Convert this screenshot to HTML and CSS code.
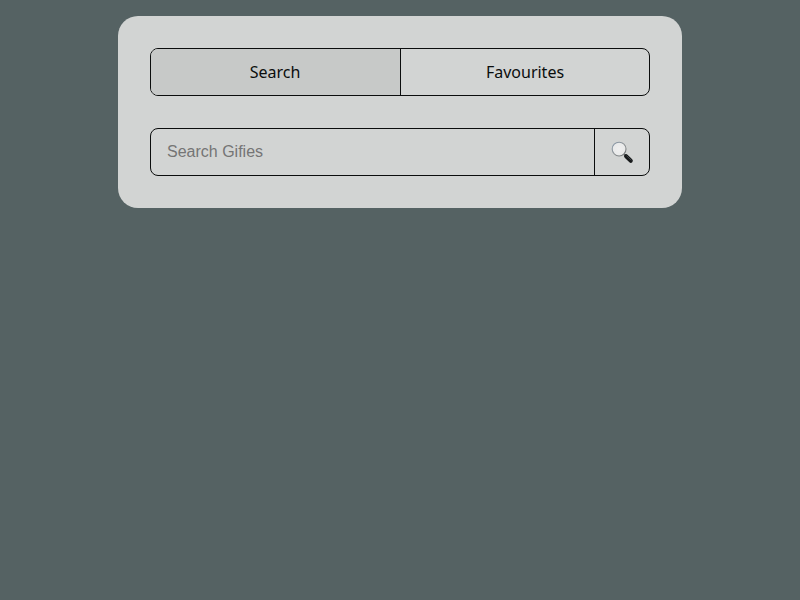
FILE: index.html
```html
<!DOCTYPE html>
<html lang="en">
<head>
<meta charset="utf-8">
<title>Gifies</title>
<link rel="stylesheet" href="styles.css">
</head>
<body>
<main class="panel">
  <nav class="tabs">
    <button class="tab active" type="button">Search</button>
    <button class="tab" type="button">Favourites</button>
  </nav>
  <form class="search">
    <input class="search-input" type="text" placeholder="Search Gifies">
    <button class="search-button" type="button">
      <svg class="glass" viewBox="0 0 24 24" width="24" height="24">
        <defs>
          <linearGradient id="rim" x1="0" y1="0" x2="1" y2="1">
            <stop offset="0" stop-color="#8799ab"/>
            <stop offset="0.5" stop-color="#929698"/>
            <stop offset="1" stop-color="#6c6f70"/>
          </linearGradient>
          <radialGradient id="lens">
            <stop offset="0" stop-color="#efefef"/>
            <stop offset="1" stop-color="#e8e9e9"/>
          </radialGradient>
        </defs>
        <path d="M13.8 14l2 2" stroke="#656868" stroke-width="1.8"/>
        <path d="M16.1 16.2l4.7 4.6" stroke="#17191a" stroke-width="4" stroke-linecap="round"/>
        <path d="M16.8 16l4.3 4" stroke="#444b4f" stroke-width="0.9" stroke-linecap="round"/>
        <circle cx="9.1" cy="9.1" r="6.9" fill="url(#lens)" stroke="url(#rim)" stroke-width="1.1"/>
      </svg>
    </button>
  </form>
</main>
</body>
</html>
```
FILE: styles.css
```css
* { box-sizing: border-box; }
body {
  margin: 0;
  padding: 16px;
  background: #556263;
  font-family: "Noto Sans", sans-serif;
  font-size: 16px;
}
.panel {
  width: 564px;
  height: 192px;
  margin: 0 auto;
  padding: 32px;
  display: flex;
  flex-direction: column;
  gap: 32px;
  background: #d2d4d3;
  border-radius: 20px;
}
.tabs, .search {
  display: flex;
  height: 48px;
  border: 1px solid #0b0d0d;
  border-radius: 8px;
  overflow: hidden;
}
.tab {
  flex: 1;
  padding: 0;
  border: 0;
  background: transparent;
  font: inherit;
  color: #0b0d0d;
}
.tab.active {
  flex: 0 0 250px;
  padding-right: 1px;
  border-right: 1px solid #0b0d0d;
  background: #c7c9c8;
}
.search-input {
  flex: 1;
  min-width: 0;
  padding: 0 16px;
  border: 0;
  border-right: 1px solid #0b0d0d;
  background: transparent;
  font: 16px "Liberation Sans", Arial, sans-serif;
}
.search-button {
  display: flex;
  align-items: center;
  justify-content: center;
  width: 54px;
  padding: 0;
  border: 0;
  background: transparent;
}
.glass {
  display: block;
  fill: none;
}
```
